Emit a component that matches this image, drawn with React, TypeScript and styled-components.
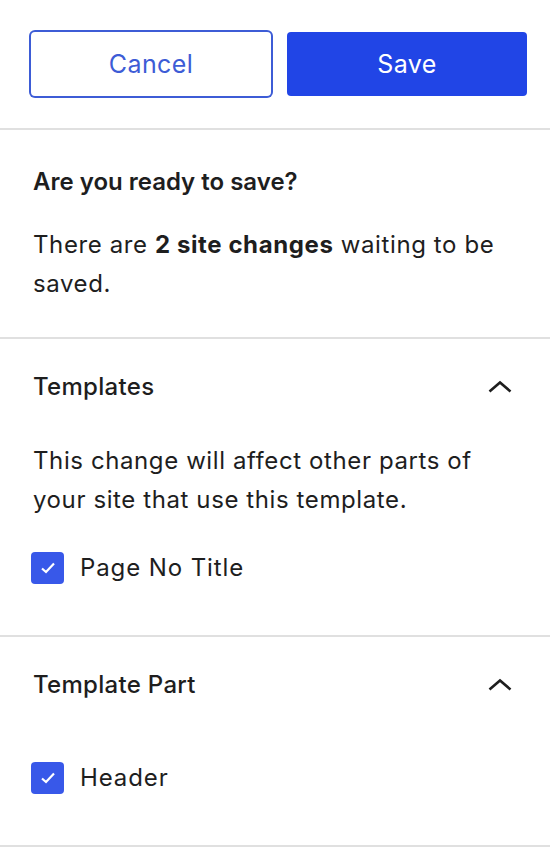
import React, { useState } from 'react';
import styled, { createGlobalStyle } from 'styled-components';

const GlobalStyle = createGlobalStyle`
    html, body {
        margin: 0;
        padding: 0;
        background: #fff;
    }
    body {
        font-family: Inter, 'Noto Sans', 'Liberation Sans', sans-serif;
        color: #1e1e1e;
        -webkit-font-smoothing: antialiased;
    }
`;

const Panel = styled.div`
    width: 550px;
    background: #fff;
`;

const Actions = styled.div`
    display: flex;
    gap: 16px;
    padding: 32px 23px 32px 31px;
    border-bottom: 2px solid #e0e0e0;
`;

const ActionButton = styled.button<{ primary?: boolean }>`
    flex: 1;
    height: 64px;
    border: none;
    border-radius: 4px;
    font-family: inherit;
    font-size: 25px;
    letter-spacing: 0.4px;
    font-weight: 400;
    cursor: pointer;
    background: ${(props) => (props.primary ? '#2145e6' : '#fff')};
    color: ${(props) => (props.primary ? '#fff' : '#3d5cd6')};
    box-shadow: ${(props) => (props.primary ? 'none' : '0 0 0 2px #3d5cd6')};
`;

const Section = styled.section`
    padding: 37px 33px 34px 33px;
    border-bottom: 2px solid #e0e0e0;
`;

const Heading = styled.h2`
    margin: 0 0 28px;
    font-size: 24px;
    line-height: 30px;
    font-weight: 600;
`;

const Text = styled.p`
    margin: 0;
    font-size: 24px;
    letter-spacing: 0.6px;
    line-height: 39px;
    font-weight: 400;
`;

const Group = styled.section`
    padding: 33px 37px 51px 33px;
    border-bottom: 2px solid #e0e0e0;
`;

const GroupTitle = styled.button`
    display: flex;
    align-items: center;
    justify-content: space-between;
    width: 100%;
    padding: 0;
    border: none;
    background: none;
    font-family: inherit;
    font-size: 24px;
    letter-spacing: 0.3px;
    line-height: 30px;
    font-weight: 500;
    color: #1e1e1e;
    text-align: left;
    cursor: pointer;
`;

const GroupBody = styled.div<{ offset: number }>`
    display: flex;
    flex-direction: column;
    gap: 33px;
    margin-top: ${(props) => props.offset}px;
`;

const CheckRow = styled.label`
    display: flex;
    align-items: center;
    gap: 16px;
    font-size: 24px;
    letter-spacing: 0.9px;
    line-height: 32px;
    cursor: pointer;
`;

const Box = styled.span<{ checked: boolean }>`
    display: flex;
    align-items: center;
    justify-content: center;
    width: 33px;
    height: 32px;
    margin-left: -2px;
    border-radius: 4px;
    background: ${(props) => (props.checked ? '#3858e9' : '#fff')};
    border: ${(props) => (props.checked ? 'none' : '2px solid #1e1e1e')};
    box-sizing: border-box;
`;

const Chevron = () => (
    <svg width='26' height='16' viewBox='0 0 26 16'>
        <path d='M2.5 12.5 L13 3.5 L23.5 12.5' fill='none' stroke='#1e1e1e' strokeWidth='2.6' />
    </svg>
);

const Tick = () => (
    <svg width='20' height='20' viewBox='0 0 20 20'>
        <path d='M4 10.5 L8 14 L16 5.5' fill='none' stroke='#fff' strokeWidth='2.2' />
    </svg>
);

const Checkbox: React.FC<{ label: string }> = ({ label }) => {
    const [checked, setChecked] = useState(true);
    return (
        <CheckRow onClick={() => setChecked(!checked)}>
            <Box checked={checked}>{checked && <Tick />}</Box>
            {label}
        </CheckRow>
    );
};

export default function App() {
    return (
        <>
            <GlobalStyle />
            <Panel>
                <Actions>
                    <ActionButton>Cancel</ActionButton>
                    <ActionButton primary>Save</ActionButton>
                </Actions>

                <Section>
                    <Heading>Are you ready to save?</Heading>
                    <Text>
                        There are <strong>2 site changes</strong> waiting to be saved.
                    </Text>
                </Section>

                <Group>
                    <GroupTitle>
                        Templates
                        <Chevron />
                    </GroupTitle>
                    <GroupBody offset={39}>
                        <Text>This change will affect other parts of your site that use this template.</Text>
                        <Checkbox label='Page No Title' />
                    </GroupBody>
                </Group>

                <Group>
                    <GroupTitle>
                        Template Part
                        <Chevron />
                    </GroupTitle>
                    <GroupBody offset={62}>
                        <Checkbox label='Header' />
                    </GroupBody>
                </Group>
            </Panel>
        </>
    );
}
